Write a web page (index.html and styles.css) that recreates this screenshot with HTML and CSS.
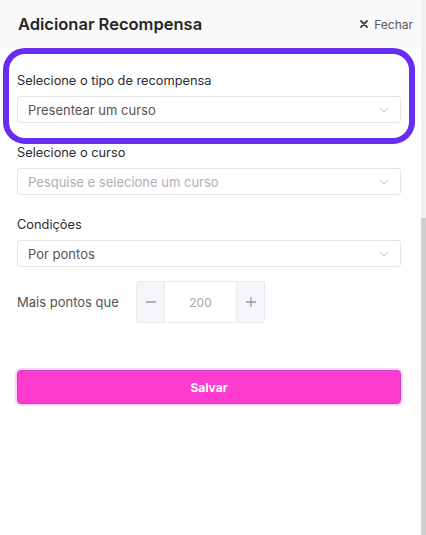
FILE: index.html
```html
<!DOCTYPE html>
<html lang="pt">
<head>
  <meta charset="UTF-8" />
  <meta name="viewport" content="width=device-width, initial-scale=1.0" />
  <title>Adicionar Recompensa</title>
  <link rel="stylesheet" href="styles.css">
</head>
<body>
  <div class="frame">
    <div class="panel">
      <header class="panel-header">
        <h1>Adicionar Recompensa</h1>
        <button class="close">
          <svg width="8" height="8" viewBox="0 0 8 8"><path d="M1 1L7 7M7 1L1 7" stroke="#444" stroke-width="1.8" stroke-linecap="round"/></svg>
          Fechar
        </button>
      </header>

      <div class="panel-body">
        <div class="highlight"></div>

        <div class="field">
          <label>Selecione o tipo de recompensa</label>
          <div class="select">
            <span>Presentear um curso</span>
            <svg class="chevron" width="10" height="6" viewBox="0 0 10 6"><path d="M1 1L5 5L9 1" fill="none" stroke="#c4c4c4" stroke-width="1"/></svg>
          </div>
        </div>

        <div class="field">
          <label>Selecione o curso</label>
          <div class="select placeholder">
            <span>Pesquise e selecione um curso</span>
            <svg class="chevron" width="10" height="6" viewBox="0 0 10 6"><path d="M1 1L5 5L9 1" fill="none" stroke="#c4c4c4" stroke-width="1"/></svg>
          </div>
        </div>

        <div class="field">
          <label>Condições</label>
          <div class="select">
            <span>Por pontos</span>
            <svg class="chevron" width="10" height="6" viewBox="0 0 10 6"><path d="M1 1L5 5L9 1" fill="none" stroke="#c4c4c4" stroke-width="1"/></svg>
          </div>
        </div>

        <div class="points-row">
          <span class="points-label">Mais pontos que</span>
          <div class="stepper">
            <button class="step">
              <svg width="10" height="10" viewBox="0 0 10 10"><path d="M0 5H10" stroke="#9a9a9a" stroke-width="1.3"/></svg>
            </button>
            <div class="step-value">200</div>
            <button class="step">
              <svg width="10" height="10" viewBox="0 0 10 10"><path d="M0 5H10M5 0V10" stroke="#9a9a9a" stroke-width="1.3"/></svg>
            </button>
          </div>
        </div>

        <button class="save">Salvar</button>
      </div>
    </div>

    <div class="scrollbar">
      <div class="scroll-thumb"></div>
    </div>
  </div>
</body>
</html>
```

FILE: styles.css
```css
body {
  margin: 0;
  font-family: 'Inter', 'Open Sans', sans-serif;
  color: #2b2b2b;
  background: #fff;
}
.frame {
  display: flex;
  height: 535px;
  overflow: hidden;
}
.panel {
  flex: 1;
}
.panel-header {
  display: flex;
  align-items: center;
  justify-content: space-between;
  height: 48px;
  padding: 0 8px 0 18px;
  background: #f9f9f9;
}
h1 {
  margin: 0;
  font-size: 16.5px;
  font-weight: 600;
  color: #262626;
}
.close {
  display: flex;
  align-items: center;
  gap: 6px;
  border: none;
  background: none;
  padding: 0;
  font-family: inherit;
  font-size: 12px;
  color: #5a5a5a;
}
.panel-body {
  position: relative;
  padding: 24px 20px 0 17px;
}
.highlight {
  position: absolute;
  left: 3px;
  top: 0;
  width: 400px;
  height: 84px;
  border: 6px solid #6a2cf2;
  border-radius: 22px;
  pointer-events: none;
}
.field {
  margin-bottom: 21px;
}
.field label {
  display: block;
  font-size: 12.8px;
  line-height: 18px;
  color: #2d2d2d;
  margin-bottom: 6px;
}
.select {
  display: flex;
  align-items: center;
  justify-content: space-between;
  height: 25px;
  padding: 0 11px 0 10px;
  border: 1px solid #e6e6e6;
  border-radius: 3px;
  background: #fff;
  font-size: 13px;
  color: #555;
}
.select.placeholder {
  color: #b0b0b0;
}
.points-row {
  display: flex;
  align-items: center;
  margin-top: -7px;
}
.points-label {
  width: 119px;
  font-size: 13px;
  color: #555;
}
.stepper {
  display: flex;
  height: 40px;
  border: 1px solid #e9e9ef;
  border-radius: 3px;
  overflow: hidden;
}
.step {
  width: 27px;
  border: none;
  background: #f5f6fa;
  display: flex;
  align-items: center;
  justify-content: center;
  padding: 0;
}
.step-value {
  width: 71px;
  border-left: 1px solid #e9e9ef;
  border-right: 1px solid #e9e9ef;
  display: flex;
  align-items: center;
  justify-content: center;
  font-size: 12px;
  color: #a8a8a8;
}
.save {
  display: block;
  width: 384px;
  height: 34px;
  margin-top: 47px;
  border: 1px solid #c544c6;
  border-radius: 4px;
  background: #ff3bcf;
  box-shadow: 0 0 0 2px #fcd4f4;
  color: #fff;
  font-family: inherit;
  font-size: 12px;
  font-weight: 700;
}
.scrollbar {
  width: 5px;
  display: flex;
  flex-direction: column;
  background: #f1f1f1;
  padding-top: 218px;
}
.scroll-thumb {
  flex: 1;
  background: #cfcfcf;
}
```
